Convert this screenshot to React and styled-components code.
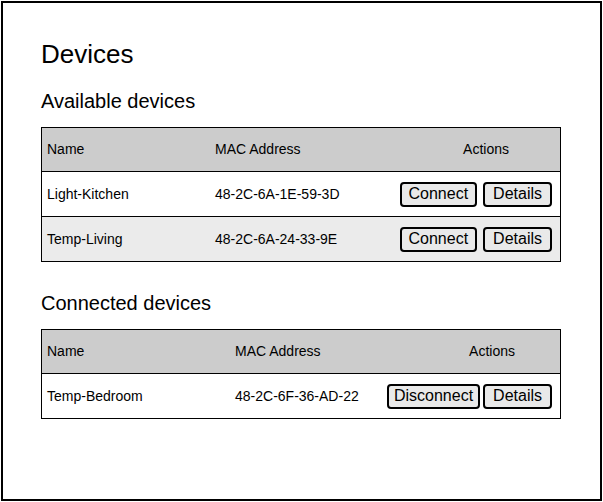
import React from 'react';
import styled, { createGlobalStyle } from 'styled-components';

const GlobalStyle = createGlobalStyle`
  html, body {
    margin: 0;
    padding: 0;
    background: #ffffff;
  }
  body {
    font-family: "Liberation Sans", Arial, sans-serif;
    color: #000000;
  }
`;

const Frame = styled.div`
  box-sizing: border-box;
  margin: 1px;
  height: calc(100vh - 2px);
  border: 2px solid #000;
  padding: 36px 0 0 38px;
`;

const Title = styled.h1`
  margin: 0;
  font-size: 26px;
  line-height: 30px;
  font-weight: normal;
`;

const SectionTitle = styled.h2`
  margin: ${(p) => p.$top}px 0 14px 0;
  font-size: 20px;
  line-height: 23px;
  font-weight: normal;
`;

const Table = styled.div`
  box-sizing: border-box;
  width: 520px;
  border: 1px solid #000;
`;

const Row = styled.div`
  display: grid;
  grid-template-columns: ${(p) => p.$cols};
  height: ${(p) => (p.$head ? 43 : 44)}px;
  align-items: center;
  background: ${(p) => (p.$head ? '#cccccc' : p.$shade ? '#ebebeb' : '#ffffff')};
  border-top: ${(p) => (p.$first ? 'none' : '1px solid #000')};
  font-size: 14px;
`;

const Cell = styled.div`
  padding-left: 5px;
  padding-bottom: 1px;
`;

const ActionsHead = styled.div`
  text-align: right;
  padding-right: ${(p) => p.$pad}px;
  padding-bottom: 1px;
`;

const Actions = styled.div`
  display: flex;
  justify-content: flex-end;
  gap: ${(p) => p.$gap}px;
  padding-right: 8px;
`;

const Button = styled.button`
  font-family: "Liberation Sans", Arial, sans-serif;
  font-size: 16px;
  line-height: 19px;
  color: #000;
  background: #e9e9e9;
  border: 2px solid #000;
  border-radius: 4px;
  padding: 0 ${(p) => p.$pad || 7}px 2px;
  margin: 0;
`;

const available = [
  { name: 'Light-Kitchen', mac: '48-2C-6A-1E-59-3D' },
  { name: 'Temp-Living', mac: '48-2C-6A-24-33-9E' },
];

const connected = [{ name: 'Temp-Bedroom', mac: '48-2C-6F-36-AD-22' }];

function DeviceTable({ cols, actionsPad, rows, action, actionPad, gap }) {
  return (
    <Table>
      <Row $head $first $cols={cols}>
        <Cell>Name</Cell>
        <Cell>MAC Address</Cell>
        <ActionsHead $pad={actionsPad}>Actions</ActionsHead>
      </Row>
      {rows.map((d, i) => (
        <Row key={d.name} $cols={cols} $shade={i % 2 === 1}>
          <Cell>{d.name}</Cell>
          <Cell>{d.mac}</Cell>
          <Actions $gap={gap}>
            <Button $pad={actionPad}>{action}</Button>
            <Button $pad={8}>Details</Button>
          </Actions>
        </Row>
      ))}
    </Table>
  );
}

export default function App() {
  return (
    <>
      <GlobalStyle />
      <Frame>
        <Title>Devices</Title>
        <SectionTitle $top={21}>Available devices</SectionTitle>
        <DeviceTable
          cols="168px 1fr 166px"
          actionsPad={51}
          rows={available}
          action="Connect"
          actionPad={7}
          gap={6}
        />
        <SectionTitle $top={30}>Connected devices</SectionTitle>
        <DeviceTable
          cols="188px 1fr 178px"
          actionsPad={45}
          rows={connected}
          action="Disconnect"
          actionPad={5}
          gap={3}
        />
      </Frame>
    </>
  );
}
